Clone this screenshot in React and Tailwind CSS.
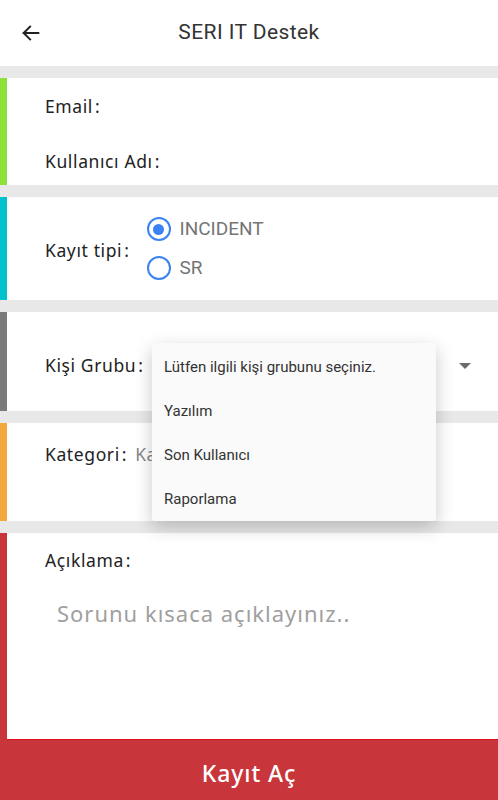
import React, { useState } from "react";

const labelFont = { fontFamily: '"Noto Sans", "Open Sans", sans-serif' };

const Card = ({ color, className, children }) => (
  <div className="flex bg-white">
    <div className={`w-[7px] shrink-0 ${color}`} />
    <div className={`flex-1 ${className}`}>{children}</div>
  </div>
);

const Gap = () => <div className="h-3 bg-[#e8e8e8]" />;

// label with the wide colon the app's font has
const Label = ({ text, className = "" }) => (
  <span className={`text-[17.5px] tracking-[0.035em] text-[#222] ${className}`}>
    {text}
    <span className="ml-[2px]">:</span>
  </span>
);

const Radio = ({ checked, label, onClick }) => (
  <button className="flex items-center gap-[9px] h-[39px]" onClick={onClick}>
    <span className="w-[24px] h-[24px] rounded-full border-[2.5px] border-[#3b82f6] flex items-center justify-center">
      {checked && <span className="w-[11px] h-[11px] rounded-full bg-[#3b82f6]" />}
    </span>
    <span className="text-[19px] text-[#757575] font-['Roboto',sans-serif]">{label}</span>
  </button>
);

const App = () => {
  const [type, setType] = useState("INCIDENT");
  const groups = ["Lütfen ilgili kişi grubunu seçiniz.", "Yazılım", "Son Kullanıcı", "Raporlama"];

  return (
    <div className="relative w-[498px] h-[800px] flex flex-col bg-white overflow-hidden" style={labelFont}>
      {/* header */}
      <div className="h-[66px] flex items-center px-5 relative">
        <svg width="22" height="22" viewBox="0 0 24 24" className="text-[#222]">
          <path d="M20 12H4M11 5l-7 7 7 7" fill="none" stroke="currentColor" strokeWidth="2.2" strokeLinecap="square" />
        </svg>
        <div className="absolute inset-x-0 text-center text-[21px] tracking-[0.02em] text-[#333] font-['Roboto',sans-serif] pointer-events-none">
          SERI IT Destek
        </div>
      </div>
      <Gap />

      <Card color="bg-[#8ee03b]" className="h-[107px] pl-[38px] pt-[16px]">
        <div className="h-[25px] leading-[25px]"><Label text="Email" /></div>
        <div className="mt-[30px] h-[25px] leading-[25px]"><Label text="Kullanıcı Adı" /></div>
      </Card>
      <Gap />

      <Card color="bg-[#00c2cc]" className="h-[103px] pl-[38px] flex items-center gap-[17px]">
        <Label text="Kayıt tipi" className="mt-[4px]" />
        <div className="flex flex-col">
          <Radio checked={type === "INCIDENT"} label="INCIDENT" onClick={() => setType("INCIDENT")} />
          <Radio checked={type === "SR"} label="SR" onClick={() => setType("SR")} />
        </div>
      </Card>
      <Gap />

      <Card color="bg-[#7b7b7b]" className="h-[99px] pl-[38px] pr-[27px] pt-[8px] flex items-center justify-between">
        <Label text="Kişi Grubu" />
        <div className="w-0 h-0 border-x-[6px] border-x-transparent border-t-[6px] border-t-[#6b6b6b]" />
      </Card>
      <Gap />

      <Card color="bg-[#f2a93b]" className="h-[98px] pl-[38px] pt-[18px]">
        <Label text="Kategori" />
        <span className="ml-[8px] text-[17.5px] tracking-[0.035em] text-[#888]">Ka</span>
      </Card>
      <Gap />

      <div className="flex-1 flex bg-[#c8363b]">
        <div className="w-[7px] shrink-0" />
        <div className="flex-1 bg-white border-b-[1.5px] border-[#e01020] pl-[38px] pt-[14px]">
          <Label text="Açıklama" />
          <div className="mt-[24px] ml-[12px] text-[22px] tracking-[0.045em] text-[#a0a0a0]">Sorunu kısaca açıklayınız..</div>
        </div>
      </div>

      <button className="h-[60px] shrink-0 pt-[6px] bg-[#c8363b] text-white text-[23px] tracking-[0.04em] font-medium flex items-center justify-center">
        Kayıt Aç
      </button>

      {/* open dropdown */}
      <div className="absolute left-[152px] top-[343px] w-[284px] h-[178px] bg-[#fafafa] rounded-[3px] shadow-[0_6px_18px_rgba(0,0,0,0.22)] flex flex-col pt-[2px] font-['Roboto',sans-serif] text-[15px] text-[#333]">
        {groups.map((g) => (
          <div key={g} className="h-[44px] flex items-center pl-[12px]">
            {g}
          </div>
        ))}
      </div>
    </div>
  );
};

export default App;
